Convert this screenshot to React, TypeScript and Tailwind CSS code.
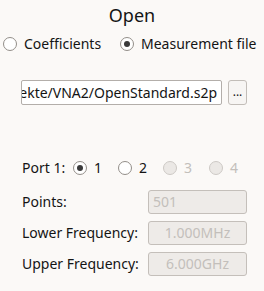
import React from "react";

type RadioProps = {
  label: string;
  checked?: boolean;
  disabled?: boolean;
  className?: string;
};

const Radio = ({ label, checked = false, disabled = false, className = "" }: RadioProps) => (
  <div className={`flex items-center gap-[7px] ${className}`}>
    <div
      className={`w-[14px] h-[14px] rounded-full border flex items-center justify-center flex-shrink-0 ${
        disabled ? "bg-[#ebe8e5] border-[#cdc9c5]" : "bg-white border-[#938e89]"
      }`}
    >
      {checked && <div className="w-[6px] h-[6px] rounded-full bg-[#3a3a3a]" />}
    </div>
    <span className={disabled ? "text-[#c3bfbb]" : "text-[#141414]"}>{label}</span>
  </div>
);

const FIELDS = [
  { label: "Points:", value: "501", align: "left" },
  { label: "Lower Frequency:", value: "1.000MHz", align: "center" },
  { label: "Upper Frequency:", value: "6.000GHz", align: "center" },
];

export default function App() {
  return (
    <div className="w-[264px] h-[291px] overflow-hidden bg-[#fbf9f7] text-[#141414] text-[14px] leading-[20px] font-['Noto_Sans',sans-serif]">
      {/* Title */}
      <div className="h-[34px] pt-[3px] text-center text-[18px] leading-[24px]">Open</div>

      {/* Source selection */}
      <div className="h-[20px] flex items-center pl-[3px]">
        <Radio label="Coefficients" className="w-[117px]" />
        <Radio label="Measurement file" checked />
      </div>

      {/* File path, scrolled to its end */}
      <div className="mt-[26px] h-[25px] flex pl-[21px] gap-[6px]">
        <div className="w-[201px] h-full bg-white border border-[#b3aeaa] rounded-[2px] overflow-hidden flex items-center justify-end pr-[4px]">
          <span className="whitespace-nowrap">Projekte/VNA2/OpenStandard.s2p</span>
        </div>
        <div className="w-[19px] h-full border border-[#c2bdb8] rounded-[3px] bg-[#f7f5f3] flex items-center justify-center text-[12px] leading-none pb-[1px]">
          ...
        </div>
      </div>

      {/* Port selection */}
      <div className="mt-[53px] h-[20px] flex items-center pl-[22px]">
        <span className="w-[51px]">Port 1:</span>
        <Radio label="1" checked className="w-[45px]" />
        <Radio label="2" className="w-[45px]" />
        <Radio label="3" disabled className="w-[46px]" />
        <Radio label="4" disabled />
      </div>

      {/* Measurement parameters */}
      <div className="mt-[12px] flex flex-col gap-[7px] pl-[22px]">
        {FIELDS.map((f) => (
          <div key={f.label} className="h-[24px] flex items-center">
            <span className="w-[126px]">{f.label}</span>
            <div
              className={`w-[99px] h-full bg-[#eeebe8] border border-[#c4bfba] rounded-[3px] flex items-center text-[#c3bfbb] ${
                f.align === "center" ? "justify-center" : "justify-start pl-[4px]"
              }`}
            >
              {f.value}
            </div>
          </div>
        ))}
      </div>
    </div>
  );
}
